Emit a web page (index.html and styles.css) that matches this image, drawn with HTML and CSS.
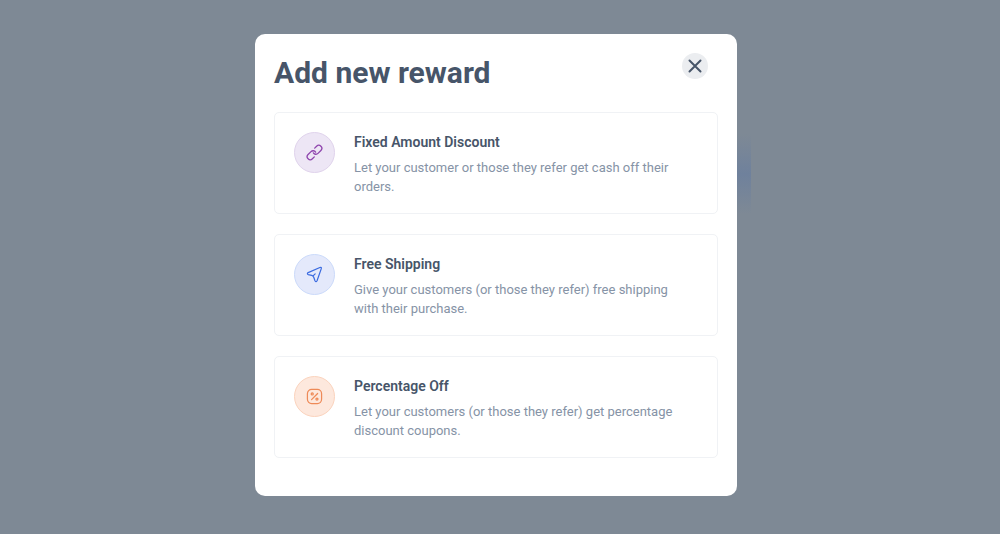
FILE: index.html
```html
<!DOCTYPE html>
<html lang="en">
<head>
  <meta charset="UTF-8">
  <meta name="viewport" content="width=device-width, initial-scale=1.0">
  <title>Add new reward</title>
  <link rel="stylesheet" href="styles.css">
</head>
<body>
  <div class="overlay">
    <div class="modal" role="dialog" aria-labelledby="modal-title">
      <div class="modal-body">
        <header class="modal-header">
          <h1 id="modal-title">Add new reward</h1>
          <button class="close" type="button" aria-label="Close">
            <svg width="14" height="14" viewBox="0 0 14 14"><path d="M1.5 1.5l11 11M12.5 1.5l-11 11"/></svg>
          </button>
        </header>
        <ul class="rewards">
          <li>
            <a class="reward" href="#fixed">
              <span class="icon icon-purple">
                <svg width="17" height="17" viewBox="0 0 17 17"><path d="M7.4 8.9a3 3 0 0 0 4.6.5l2.900-2.900a3 3 0 0 0-4.300-4.300l-1.900 1.900"/><path d="M9.600 8.100a3 3 0 0 0-4.600-.5l-2.900 2.900a3 3 0 0 0 4.300 4.300l1.900-1.900"/></svg>
              </span>
              <div class="text">
                <h2>Fixed Amount Discount</h2>
                <p>Let your customer or those they refer get cash off their orders.</p>
              </div>
            </a>
          </li>
          <li>
            <a class="reward" href="#shipping">
              <span class="icon icon-blue">
                <svg width="17" height="17" viewBox="0 0 18 18"><path d="M2.300 7L14.700 1.600Q16.800 1 16.100 3L11.700 15.600Q10.600 17.600 9.500 15.600L8.200 12Q7.600 10.400 6.100 9.900L2.300 9.100Q.7 8.100 2.300 7ZM7.500 10.500L9.700 8.300"/></svg>
              </span>
              <div class="text">
                <h2>Free Shipping</h2>
                <p>Give your customers (or those they refer) free shipping with their purchase.</p>
              </div>
            </a>
          </li>
          <li>
            <a class="reward" href="#percentage">
              <span class="icon icon-orange">
                <svg width="17" height="17" viewBox="0 0 18 18"><rect x="1.5" y="1.5" width="15" height="15" rx="4.5"/><path d="M5.900 12.300l6.400-6.500"/><circle cx="6.600" cy="6.300" r="1.100"/><circle cx="11.600" cy="11.700" r="1.100"/></svg>
              </span>
              <div class="text">
                <h2>Percentage Off</h2>
                <p>Let your customers (or those they refer) get percentage discount coupons.</p>
              </div>
            </a>
          </li>
        </ul>
      </div>
    </div>
  </div>
</body>
</html>
```

FILE: styles.css
```css
* {
  box-sizing: border-box;
}

body {
  margin: 0;
  font-family: Roboto, "Liberation Sans", sans-serif;
  color: #475569;
  background: #7e8995;
}

h1, h2, p, ul {
  margin: 0;
  padding: 0;
}

.overlay {
  display: flex;
  align-items: center;
  justify-content: center;
  min-height: 100vh;
  padding: 16px 24px 20px 16px;
}

.modal {
  position: relative;
  width: 100%;
  max-width: 482px;
}

/* blurred page content showing at the edge of the dialog */
.modal::after {
  content: '';
  position: absolute;
  top: 100px;
  right: -14px;
  width: 24px;
  height: 80px;
  background: linear-gradient(transparent, #6f819c 50%, transparent);
}

.modal-body {
  position: relative;
  z-index: 1;
  padding: 19px 19px 38px;
  border-radius: 10px;
  background: #fff;
}

.modal-header {
  display: flex;
  align-items: flex-start;
  justify-content: space-between;
  padding-right: 10px;
  margin-bottom: 19px;
}

.modal-header h1 {
  font-size: 30px;
  line-height: 40px;
  font-weight: 700;
}

.close {
  display: flex;
  align-items: center;
  justify-content: center;
  width: 26px;
  height: 26px;
  padding: 0;
  border: none;
  border-radius: 50%;
  background: #ebedf0;
  cursor: pointer;
}

.close svg {
  fill: none;
  stroke: #475569;
  stroke-width: 2;
  stroke-linecap: round;
}

.rewards {
  display: flex;
  flex-direction: column;
  gap: 20px;
  list-style: none;
}

.reward {
  display: flex;
  gap: 19px;
  padding: 19px 32px 17px 19px;
  border: 1px solid #f0f2f5;
  border-radius: 5px;
  color: inherit;
  text-decoration: none;
}

.reward h2 {
  margin-bottom: 6px;
  font-size: 14px;
  line-height: 20px;
  font-weight: 600;
}

.reward p {
  font-size: 13px;
  line-height: 19px;
  color: #8693a6;
}

.icon {
  display: flex;
  flex: none;
  align-items: center;
  justify-content: center;
  width: 41px;
  height: 41px;
  border: 1px solid;
  border-radius: 50%;
}

.icon svg {
  fill: none;
  stroke: currentColor;
  stroke-width: 1.3;
  stroke-linecap: round;
  stroke-linejoin: round;
}

.icon-purple {
  color: #8e44ad;
  border-color: #e0d3ec;
  background: #ede6f5;
}

.icon-blue {
  color: #3b6be0;
  border-color: #cbdafa;
  background: #e4e9fb;
}

.icon-orange {
  color: #ee8a58;
  border-color: #fbd3bd;
  background: #fde8dd;
}
```
